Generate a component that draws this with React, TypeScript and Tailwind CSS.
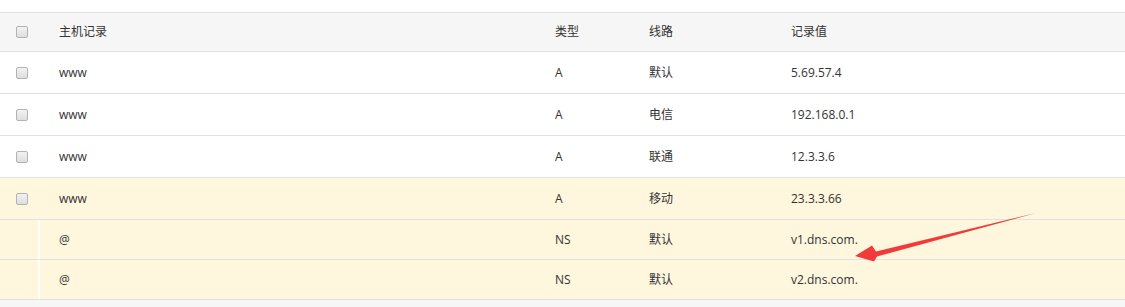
const rows = [
  { host: "www", type: "A", line: "默认", value: "5.69.57.4", check: true, hl: false },
  { host: "www", type: "A", line: "电信", value: "192.168.0.1", check: true, hl: false },
  { host: "www", type: "A", line: "联通", value: "12.3.3.6", check: true, hl: false },
  { host: "www", type: "A", line: "移动", value: "23.3.3.66", check: true, hl: true },
  { host: "@", type: "NS", line: "默认", value: "v1.dns.com.", check: false, hl: true },
  { host: "@", type: "NS", line: "默认", value: "v2.dns.com.", check: false, hl: true },
];

function Checkbox() {
  return (
    <span className="block h-[12px] w-[12px] rounded-[2px] border border-[#b3b3b3] bg-gradient-to-b from-[#f2f2f2] to-[#dedede]" />
  );
}

export default function App() {
  return (
    <div
      className="relative h-[307px] w-[1125px] overflow-hidden bg-white pt-[12px] text-[12px] text-[#333]"
      style={{ fontFamily: '"Open Sans", "Noto Sans CJK SC", sans-serif' }}
    >
      <div className="border-t border-[#e2e2e2]">
        {/* header */}
        <div className="flex h-[39px] items-center border-b border-[#e2e2e2] bg-[#f6f6f6]">
          <div className="flex w-[40px] shrink-0 pl-[16px]">
            <Checkbox />
          </div>
          <div className="w-[494px] pl-[19px]">主机记录</div>
          <div className="w-[94px] pl-[21px]">类型</div>
          <div className="w-[142px] pl-[21px]">线路</div>
          <div className="flex-1 pl-[21px]">记录值</div>
        </div>
        {rows.map((r, i) => (
          <div
            key={i}
            className={`flex items-stretch border-b border-[#e2e2e2] ${r.check ? "h-[42px]" : "h-[40px]"} ${r.hl ? "bg-[#fff6de]" : "bg-white"}`}
          >
            <div
              className={`flex w-[40px] shrink-0 items-center pl-[16px] ${r.check ? "" : "border-r-2 border-white"}`}
            >
              {r.check && <Checkbox />}
            </div>
            <div className="flex w-[494px] items-center pl-[19px]">{r.host}</div>
            <div className="flex w-[94px] items-center pl-[21px]">{r.type}</div>
            <div className="flex w-[142px] items-center pl-[21px]">{r.line}</div>
            <div className="flex flex-1 items-center pl-[21px]">{r.value}</div>
          </div>
        ))}
        <div className="h-[10px] bg-[#f6f6f6]" />
      </div>

      <svg className="absolute left-0 top-0" width="1125" height="307">
        <polygon
          points="1036,213 876,251.5 872,245.5 855,256 874,261.5 877,256.5"
          fill="#f23a3a"
        />
      </svg>
    </div>
  );
}
